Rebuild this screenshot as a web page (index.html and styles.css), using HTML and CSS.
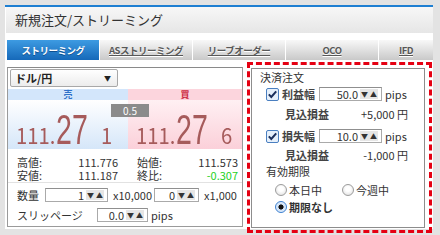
FILE: index.html
```html
<!DOCTYPE html>
<html lang="ja">
<head>
<meta charset="utf-8">
<title>新規注文/ストリーミング</title>
<link rel="stylesheet" href="styles.css">
</head>
<body>
<div class="window">
  <div class="titlebar">新規注文/ストリーミング</div>
  <div class="tabs">
    <div class="tab active">ストリーミング</div>
    <div class="tab"><span class="link">ASストリーミング</span></div>
    <div class="tab"><span class="link">リーブオーダー</span></div>
    <div class="tab"><span class="link">OCO</span></div>
    <div class="tab last"><span class="link">IFD</span></div>
  </div>
  <div class="content">
    <div class="left">
      <div class="pair-row">
        <div class="select">ドル/円<span class="caret">▼</span></div>
      </div>
      <div class="bands">
        <div class="band sell">売</div>
        <div class="band buy">買</div>
      </div>
      <div class="prices">
        <div class="price sell"><span class="sm">111.</span><span class="lg">27</span><span class="sm">1</span></div>
        <div class="price buy"><span class="sm">111.</span><span class="lg">27</span><span class="sm">6</span></div>
        <div class="spread">0.5</div>
      </div>
      <div class="stats">
        <div class="stat"><span>高値:</span><span>111.776</span></div>
        <div class="stat"><span>始値:</span><span>111.573</span></div>
        <div class="stat"><span>安値:</span><span>111.187</span></div>
        <div class="stat"><span>終比:</span><span class="up">-0.307</span></div>
      </div>
      <div class="divider"></div>
      <div class="form-row qty">
        <span class="lbl">数量</span>
        <div class="spin w63"><span class="val">1</span><span class="arrows"><i>▼</i><i>▲</i></span></div>
        <span class="unit u1">x10,000</span>
        <div class="spin w45"><span class="val">0</span><span class="arrows"><i>▼</i><i>▲</i></span></div>
        <span class="unit">x1,000</span>
      </div>
      <div class="form-row slip">
        <span class="lbl slbl">スリッページ</span>
        <div class="spin w51"><span class="val">0.0</span><span class="arrows"><i>▼</i><i>▲</i></span></div>
        <span class="unit pips">pips</span>
      </div>
    </div>
    <div class="right-wrap">
      <div class="right">
        <div class="sec-title">決済注文</div>
        <div class="field f1">
          <svg class="cb" viewBox="0 0 13 13" width="13" height="13"><rect x="0.5" y="0.5" width="12" height="12" rx="1.5" fill="#e6f0fb" stroke="#4a7fc0"/><path d="M2.8 6.4 L5.3 9 L10.2 3.4" fill="none" stroke="#1b2f5c" stroke-width="2"/></svg>
          <span class="flbl">利益幅</span>
          <div class="spin w63"><span class="val">50.0</span><span class="arrows"><i>▼</i><i>▲</i></span></div>
          <span class="unit">pips</span>
        </div>
        <div class="estimate e1"><span>見込損益</span><span class="amt">+5,000 円</span></div>
        <div class="field">
          <svg class="cb" viewBox="0 0 13 13" width="13" height="13"><rect x="0.5" y="0.5" width="12" height="12" rx="1.5" fill="#e6f0fb" stroke="#4a7fc0"/><path d="M2.8 6.4 L5.3 9 L10.2 3.4" fill="none" stroke="#1b2f5c" stroke-width="2"/></svg>
          <span class="flbl">損失幅</span>
          <div class="spin w63"><span class="val">10.0</span><span class="arrows"><i>▼</i><i>▲</i></span></div>
          <span class="unit">pips</span>
        </div>
        <div class="estimate e2"><span>見込損益</span><span class="amt">-1,000 円</span></div>
        <div class="sec-title expiry">有効期限</div>
        <div class="radio-row r1">
          <span class="radio"></span><span class="rlbl">本日中</span>
          <span class="radio second"></span><span class="rlbl">今週中</span>
        </div>
        <div class="radio-row r2">
          <span class="radio checked"></span><span class="rlbl sel">期限なし</span>
        </div>
      </div>
      <div class="highlight"></div>
    </div>
  </div>
</div>
</body>
</html>
```

FILE: styles.css
```css
html, body {
  margin: 0;
  padding: 0;
}
body {
  background: #e3e3e3;
  font-family: "Noto Sans CJK JP", "Noto Sans", sans-serif;
  font-size: 11px;
  color: #333;
  width: 440px;
  height: 235px;
  overflow: hidden;
}
.window {
  margin: 5px 0 0 5px;
  width: 428px;
  background: #fff;
  border-top: 2px solid #1e7fd2;
  padding-bottom: 1px;
}
.titlebar {
  height: 26px;
  line-height: 26px;
  margin-left: 1px;
  padding-left: 9px;
  font-size: 13px;
  color: #333;
  background: linear-gradient(#f7f7f7, #e6e6e6);
}
.tabs {
  display: flex;
  margin-top: 7px;
  padding-left: 2px;
  height: 20px;
}
.tab {
  width: 92px;
  margin-right: 1px;
  height: 20px;
  line-height: 20px;
  text-align: center;
  font-size: 9.5px;
  letter-spacing: -0.5px;
  font-weight: bold;
  color: #585858;
  background: linear-gradient(#f8f8f8, #c9c9c9);
  text-shadow: 0 1px 0 #fff;
  white-space: nowrap;
}
.tab .link {
  text-decoration: underline;
}
.tab.active {
  color: #fff;
  background: linear-gradient(#3d9be2, #1669b9);
  text-shadow: 0 1px 0 #0d4f8f;
}
.tab.last {
  flex: 1;
  margin-right: 0;
}
.content {
  display: flex;
  margin-top: 7px;
  padding-left: 2px;
}
.left {
  width: 236px;
  height: 160px;
  box-sizing: border-box;
  border: 1px solid #9a9a9a;
  border-top-color: #8a8a8a;
}
.pair-row {
  padding: 1px 0 0 2px;
}
.select {
  position: relative;
  width: 108px;
  height: 18px;
  box-sizing: border-box;
  border: 1px solid #a8a8a8;
  border-radius: 2px;
  background: linear-gradient(#ffffff, #ececec);
  font-size: 11px;
  font-weight: bold;
  color: #222;
  line-height: 16px;
  padding-left: 4px;
}
.caret {
  position: absolute;
  right: 6px;
  top: 0;
  font-size: 7px;
  color: #222;
}
.bands {
  display: flex;
  margin-top: 2px;
  height: 11px;
}
.band {
  line-height: 11px;
  text-align: center;
  font-size: 9px;
  font-weight: bold;
}
.band.sell {
  width: 120px;
  background: #d3e6fb;
  color: #2d6fc8;
}
.band.buy {
  flex: 1;
  background: #fcd5dd;
  color: #cc2a40;
}
.prices {
  position: relative;
  display: flex;
  height: 49px;
}
.price {
  height: 49px;
  box-sizing: border-box;
  font-size: 0;
  line-height: 1;
  color: #a65b5b;
  white-space: nowrap;
}
.price.sell {
  width: 120px;
  padding: 9px 0 0 8px;
  background: linear-gradient(#ffffff, #d5e6f9);
}
.price.buy {
  flex: 1;
  padding: 9px 0 0 8px;
  background: linear-gradient(#fff0f3, #fbd0d9);
}
.sm {
  font-size: 22px;
  display: inline-block;
  transform: scaleX(0.92);
  transform-origin: left bottom;
}
.lg {
  font-family: "Liberation Sans", "Noto Sans", sans-serif;
  font-size: 42px;
  display: inline-block;
  transform: scaleX(0.68);
  transform-origin: left bottom;
  width: 45px;
  margin-left: -3px;
}
.spread {
  position: absolute;
  left: 103px;
  top: 4px;
  width: 38px;
  height: 13px;
  line-height: 13px;
  background: #8b8b8b;
  color: #fff;
  font-size: 10px;
  text-align: center;
}
.stats {
  display: grid;
  grid-template-columns: 101px 101px;
  column-gap: 19px;
  padding: 7px 0 0 9px;
  grid-auto-rows: 13px;
}
.stat {
  display: flex;
  justify-content: space-between;
  line-height: 13px;
  color: #333;
}
.stat .up {
  color: #1fd11f;
}
.divider {
  height: 1px;
  background: #e2e2e2;
}
.form-row {
  display: flex;
  align-items: center;
  height: 15px;
  padding-left: 9px;
}
.form-row.qty {
  margin-top: 4px;
}
.form-row.slip {
  margin-top: 5px;
}
.lbl {
  width: 28px;
}
.slbl {
  width: 80px;
}
.spin {
  display: flex;
  align-items: center;
  justify-content: flex-end;
  height: 14px;
  box-sizing: border-box;
  border: 1px solid #aaa;
  border-top-color: #8f8f8f;
  background: #fff;
  padding-right: 3px;
}
.spin .val {
  font-size: 11px;
  line-height: 12px;
  margin-right: 2px;
}
.arrows {
  display: flex;
  background: #e6e6e6;
  height: 10px;
}
.arrows i {
  font-style: normal;
  font-size: 7px;
  line-height: 10px;
  width: 9px;
  text-align: center;
  color: #333;
}
.w63 { width: 63px; }
.w45 { width: 45px; }
.w51 { width: 51px; }
.unit {
  margin-left: 5px;
  color: #333;
}
.unit.u1 {
  width: 41px;
}
.unit.pips {
  margin-left: 3px;
}
.right-wrap {
  position: relative;
  margin-left: 8px;
  margin-top: 1px;
}
.right {
  width: 174px;
  height: 160px;
  box-sizing: border-box;
  border: 1px solid #8d8d8d;
  padding: 1px 0 0 8px;
}
.highlight {
  position: absolute;
  left: -4px;
  top: -6px;
  right: -7px;
  bottom: -5px;
  border: 3px dashed #e50012;
  pointer-events: none;
}
.sec-title {
  height: 14px;
  line-height: 14px;
  color: #333;
}
.field {
  display: flex;
  align-items: center;
  height: 16px;
  padding-left: 6px;
}
.field.f1 {
  margin-top: 2px;
}
.cb {
  display: block;
  margin-right: 3px;
}
.flbl {
  width: 37px;
  font-weight: bold;
  color: #444;
}
.field .unit {
  margin-left: 3px;
}
.estimate {
  display: flex;
  justify-content: space-between;
  height: 16px;
  line-height: 16px;
  width: 123px;
  margin-left: 25px;
  margin-top: 4px;
  font-weight: bold;
  color: #444;
}
.estimate .amt {
  font-weight: normal;
  color: #333;
}
.estimate.e1 {
  margin-bottom: 6px;
}
.estimate.e2 {
  margin-top: 3px;
}
.sec-title.expiry {
  margin-top: 1px;
  padding-left: 6px;
}
.radio-row {
  display: flex;
  align-items: center;
  height: 16px;
  padding-left: 15px;
}
.radio-row.r1 {
  margin-top: 4px;
}
.radio-row.r2 {
  margin-top: 1px;
}
.radio {
  width: 12px;
  height: 12px;
  box-sizing: border-box;
  border-radius: 50%;
  border: 1px solid #9c9c9c;
  background: radial-gradient(circle at 50% 40%, #ffffff 30%, #d9d9d9 100%);
  margin-right: 2px;
}
.radio.second {
  margin-left: 20px;
}
.radio.checked {
  border-color: #3b7fd0;
  background: radial-gradient(circle, #111 0 2.3px, #cfe2f7 2.8px, #eef5fd 100%);
}
.rlbl {
  color: #333;
}
.rlbl.sel {
  font-weight: bold;
}
```
